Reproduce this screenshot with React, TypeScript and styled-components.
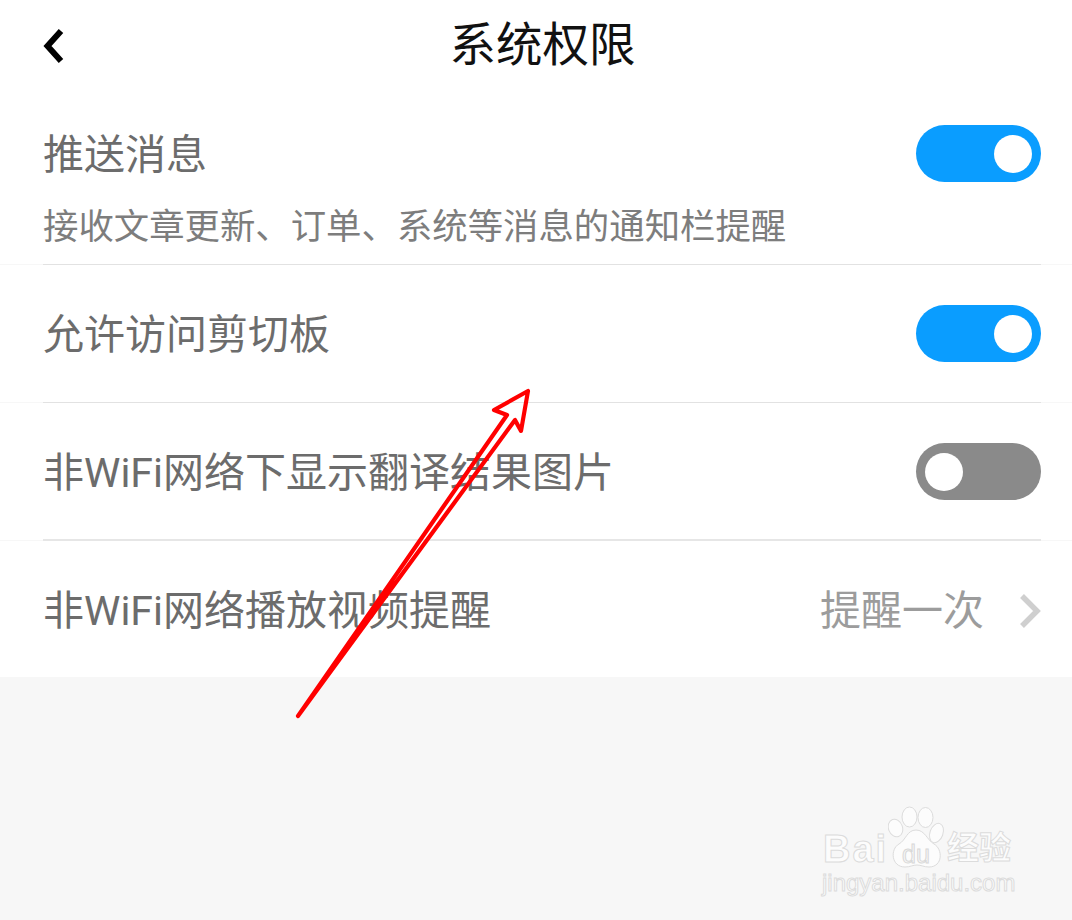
import React from "react";
import styled, { createGlobalStyle } from "styled-components";

const GlobalStyle = createGlobalStyle`
  html, body {
    margin: 0;
    padding: 0;
    background: #f7f7f7;
  }

  body {
    font-family: "Roboto", "Noto Sans CJK SC", sans-serif;
  }
`;

const Page = styled.div`
  position: relative;
  width: 1072px;
  height: 920px;
  overflow: hidden;
  background: #f7f7f7;
`;

const Sheet = styled.div`
  background: #fff;
`;

const Header = styled.header`
  display: flex;
  align-items: center;
  justify-content: center;
  height: 95px;
  padding: 0 0 4px 13px;
  box-sizing: border-box;
  position: relative;
`;

const BackButton = styled.span`
  position: absolute;
  left: 43px;
  top: 27px;
  display: block;
  width: 24px;
  height: 38px;
`;

const Title = styled.h1`
  margin: 0;
  font-size: 46.5px;
  font-weight: 400;
  line-height: 1;
  color: #111;
`;

const Row = styled.div<{ $height: number; $last?: boolean; $strong?: boolean }>`
  height: ${(p) => p.$height}px;
  padding: 0 31px 0 43px;
  box-sizing: border-box;
  border-bottom: ${(p) => (p.$last ? "0" : "1px solid #f7f7f7")};
  position: relative;
  display: flex;
  align-items: center;
  justify-content: space-between;

  &::after {
    content: "";
    display: ${(p) => (p.$last ? "none" : "block")};
    position: absolute;
    left: 43px;
    right: 31px;
    bottom: -1px;
    height: ${(p) => (p.$strong ? 2 : 1)}px;
    background: ${(p) => (p.$strong ? "#e6e6e6" : "#e2e2e2")};
  }
`;

const TopRow = styled(Row)`
  align-items: flex-start;
  padding-top: 30px;
`;

const Texts = styled.div`
  display: flex;
  flex-direction: column;
  gap: 34px;
  padding-top: 10px;
`;

const Label = styled.span`
  font-size: 41px;
  line-height: 1;
  color: #6c6c6c;
  white-space: nowrap;
`;

const RowLabel = styled(Label)`
  margin-top: 4px;
`;

const Hint = styled.span`
  font-size: 35.4px;
  line-height: 1;
  color: #7d7d7d;
  white-space: nowrap;
`;

const Track = styled.span<{ $on: boolean }>`
  width: 125px;
  height: 57px;
  border-radius: 28.5px;
  background: ${(p) => (p.$on ? "#0a9dff" : "#8a8a8a")};
  display: flex;
  align-items: center;
  justify-content: ${(p) => (p.$on ? "flex-end" : "flex-start")};
  padding: 0 9px;
  box-sizing: border-box;
  flex-shrink: 0;
`;

const Knob = styled.span`
  width: 38px;
  height: 38px;
  border-radius: 50%;
  background: #fff;
`;

const Trailing = styled.span`
  display: flex;
  align-items: center;
  gap: 35px;
  margin-top: 4px;
`;

const Value = styled.span`
  font-size: 41px;
  line-height: 1;
  color: #9c9c9c;
`;

const Overlay = styled.svg`
  position: absolute;
  left: 0;
  top: 0;
  pointer-events: none;
`;

const Watermark = styled.div`
  position: absolute;
  left: 820px;
  top: 804px;
  width: 200px;
  height: 100px;
`;

const Brand = styled.span`
  position: absolute;
  left: 3px;
  top: 26px;
  font-family: "Liberation Sans", sans-serif;
  font-size: 38px;
  font-weight: 700;
  line-height: 1;
  letter-spacing: 2px;
  color: #fcfcfc;
  -webkit-text-stroke: 1px #dcdcdc;
`;

const BrandCn = styled.span`
  position: absolute;
  left: 127px;
  top: 28px;
  font-size: 32px;
  font-weight: 700;
  line-height: 1;
  color: #fcfcfc;
  -webkit-text-stroke: 1px #dcdcdc;
`;

const BrandDu = styled.span`
  position: absolute;
  left: 82px;
  top: 38px;
  font-family: "Liberation Sans", sans-serif;
  font-size: 25px;
  line-height: 1;
  color: #f7f7f7;
  -webkit-text-stroke: 1px #d8d8d8;
`;

const Domain = styled.span`
  position: absolute;
  left: 2px;
  top: 67px;
  font-family: "Liberation Sans", sans-serif;
  font-size: 24px;
  line-height: 1;
  color: #fcfcfc;
  -webkit-text-stroke: 1px #dcdcdc;
  white-space: nowrap;
`;

const Paw = styled.svg`
  position: absolute;
  left: 68px;
  top: 2px;
`;

const Switch = ({ on }: { on: boolean }) => (
  <Track $on={on}>
    <Knob />
  </Track>
);

export default function App() {
  return (
    <Page>
      <GlobalStyle />
      <Sheet>
        <Header>
          <BackButton>
            <svg width="24" height="38" viewBox="0 0 24 38">
              <path d="M18 4 L4.5 19 L18 34" fill="none" stroke="#000" strokeWidth="6" />
            </svg>
          </BackButton>
          <Title>系统权限</Title>
        </Header>
        <TopRow $height={170}>
          <Texts>
            <Label>推送消息</Label>
            <Hint>接收文章更新、订单、系统等消息的通知栏提醒</Hint>
          </Texts>
          <Switch on />
        </TopRow>
        <Row $height={138}>
          <RowLabel>允许访问剪切板</RowLabel>
          <Switch on />
        </Row>
        <Row $height={138} $strong>
          <RowLabel>非WiFi网络下显示翻译结果图片</RowLabel>
          <Switch on={false} />
        </Row>
        <Row $height={136} $last>
          <RowLabel>非WiFi网络播放视频提醒</RowLabel>
          <Trailing>
            <Value>提醒一次</Value>
            <svg width="22" height="36" viewBox="0 0 22 36">
              <path d="M3 3 L18 18 L3 33" fill="none" stroke="#cfcfcf" strokeWidth="5.5" />
            </svg>
          </Trailing>
        </Row>
      </Sheet>

      <Watermark>
        <Paw width="60" height="64" viewBox="0 0 60 64">
          <g fill="#fcfcfc" stroke="#dcdcdc" strokeWidth="1">
            <ellipse cx="7.5" cy="22" rx="7" ry="9" transform="rotate(-20 7.5 22)" />
            <ellipse cx="21.5" cy="11" rx="7.5" ry="10" />
            <ellipse cx="37.5" cy="11.5" rx="7.5" ry="10" />
            <ellipse cx="48.5" cy="27" rx="6.5" ry="10" transform="rotate(20 48.5 27)" />
            <path d="M28 24 C19 24 18 34 11 38 C2 43 3 61 17 61 C22 61 25 59 29 59 C33 59 36 61 41 61 C55 61 55 43 46 38 C39 34 37 24 28 24 Z" />
          </g>
        </Paw>
        <Brand>Bai</Brand>
        <BrandDu>du</BrandDu>
        <BrandCn>经验</BrandCn>
        <Domain>jingyan.baidu.com</Domain>
      </Watermark>

      <Overlay width="1072" height="920" viewBox="0 0 1072 920">
        <path
          d="M298 716 L507 415 L494 410 L528 391 L521 431 L515 420 L298 716 Z"
          fill="none"
          stroke="#ff0000"
          strokeWidth="4.2"
          strokeLinejoin="round"
        />
      </Overlay>
    </Page>
  );
}
